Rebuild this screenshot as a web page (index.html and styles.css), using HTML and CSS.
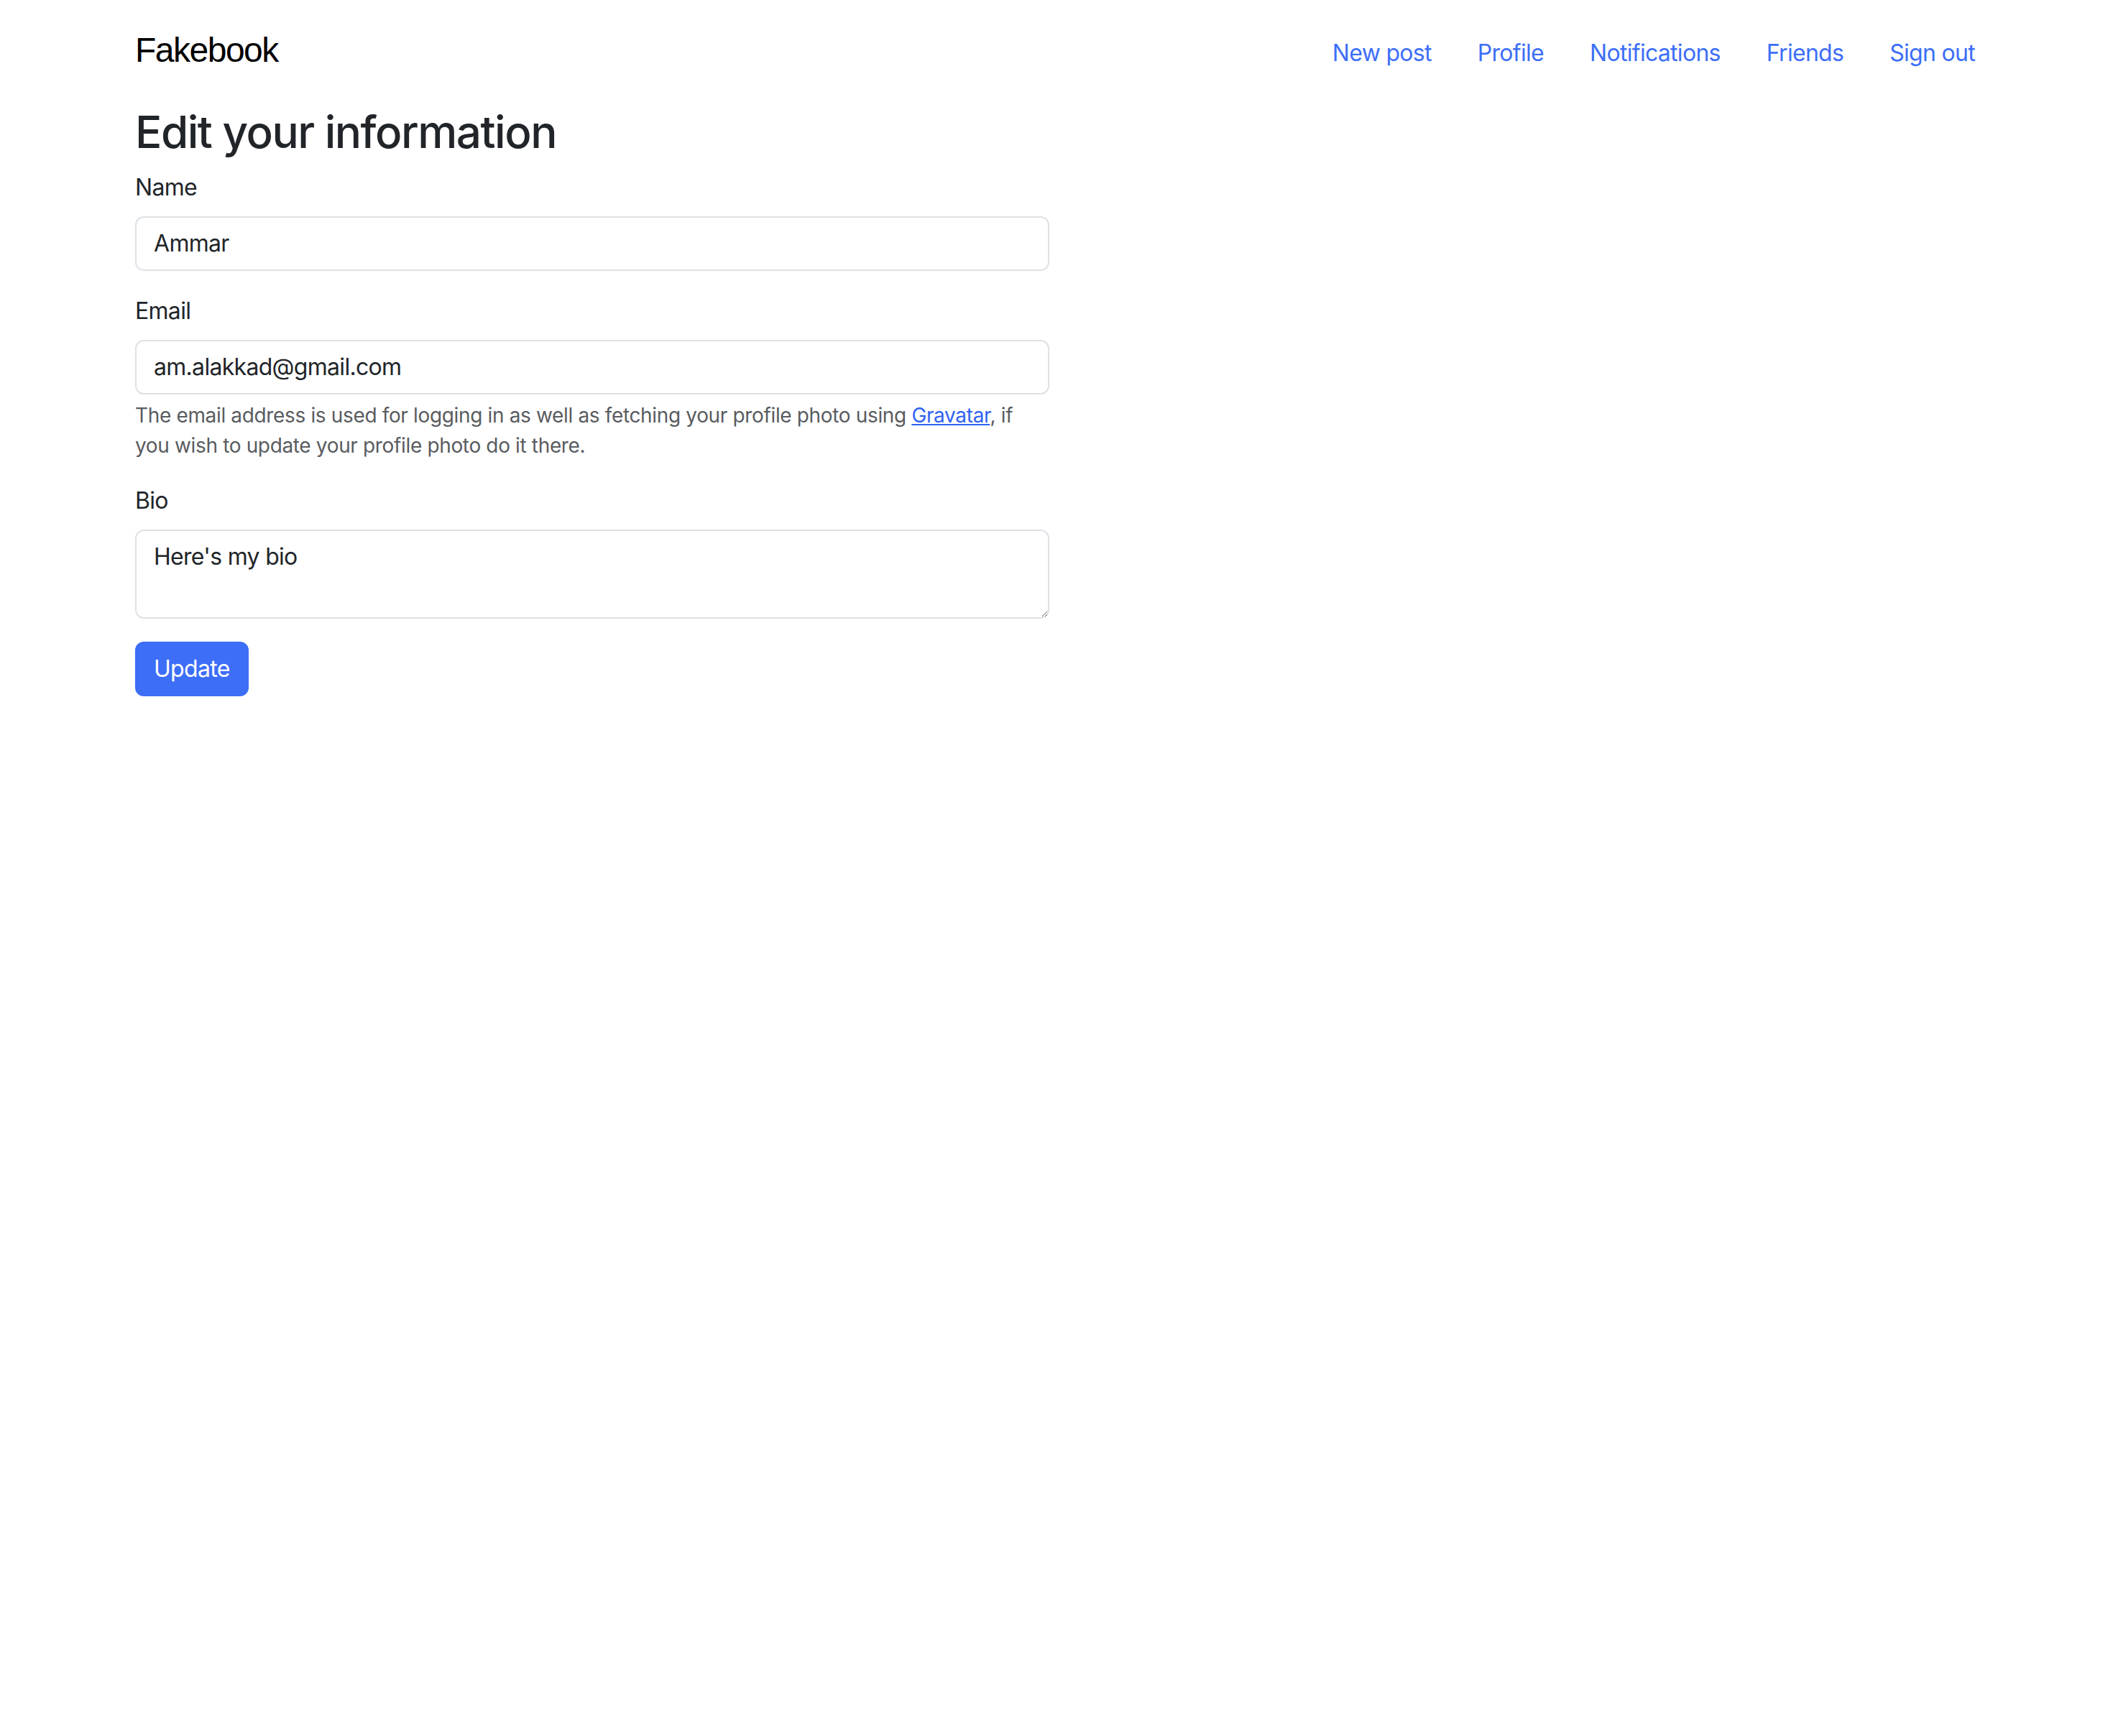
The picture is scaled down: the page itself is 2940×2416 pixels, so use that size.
FILE: index.html
```html
<!DOCTYPE html>
<html lang="en">
<head>
<meta charset="utf-8">
<title>Fakebook - Edit your information</title>
<link rel="stylesheet" href="styles.css">
</head>
<body>
<div class="page">
  <header class="topbar">
    <a class="brand" href="#">Fakebook</a>
    <nav class="nav">
      <a class="nav-link" href="#">New post</a>
      <a class="nav-link" href="#">Profile</a>
      <a class="nav-link" href="#">Notifications</a>
      <a class="nav-link" href="#">Friends</a>
      <a class="nav-link" href="#">Sign out</a>
    </nav>
  </header>
  <main class="content">
    <h2 class="title">Edit your information</h2>
    <form class="form">
      <div class="field">
        <label class="label" for="name">Name</label>
        <input class="control" id="name" type="text" value="Ammar">
      </div>
      <div class="field">
        <label class="label" for="email">Email</label>
        <input class="control" id="email" type="email" value="am.alakkad@gmail.com">
        <div class="help">The email address is used for logging in as well as fetching your profile photo using <a class="help-link" href="#">Gravatar</a>, if you wish to update your profile photo do it there.</div>
      </div>
      <div class="field">
        <label class="label" for="bio">Bio</label>
        <textarea class="control area" id="bio" rows="2">Here's my bio</textarea>
      </div>
      <button class="btn" type="button">Update</button>
    </form>
  </main>
</div>
</body>
</html>
```

FILE: styles.css
```css
html, body {
  margin: 0;
  padding: 0;
  background: #ffffff;
}

body {
  font-family: Inter, "Noto Sans", "Liberation Sans", sans-serif;
  color: #212529;
  font-size: 32px;
  line-height: 48px;
  letter-spacing: -0.7px;
}

.page {
  padding: 0 160px 0 188px;
}

.topbar {
  display: flex;
  justify-content: space-between;
  align-items: flex-start;
  height: 99px;
}

.brand {
  margin-top: 42px;
  font-family: "Liberation Sans", Arial, sans-serif;
  font-size: 48px;
  line-height: 56px;
  letter-spacing: -1.5px;
  color: #000000;
  text-decoration: none;
}

.nav {
  display: flex;
  margin-top: 50px;
}

.nav-link {
  padding: 0 32px;
  font-size: 32px;
  line-height: 48px;
  color: #3d6ef7;
  text-decoration: none;
}

.nav-link:first-child {
  padding-left: 34px;
}

.content {
  width: 1272px;
}

.title {
  margin: 48px 0 16px;
  font-size: 62px;
  line-height: 74px;
  font-weight: 500;
  letter-spacing: -1.5px;
  color: #212529;
}

.form {
  width: 1272px;
}

.field {
  margin-bottom: 32px;
}

.label {
  display: block;
  margin-bottom: 16px;
  font-size: 32px;
  line-height: 48px;
}

.control {
  display: block;
  width: 100%;
  box-sizing: border-box;
  margin: 0;
  padding: 12px 24px;
  font-family: Inter, "Noto Sans", "Liberation Sans", sans-serif;
  font-size: 32px;
  line-height: 48px;
  letter-spacing: -0.7px;
  color: #212529;
  background: #ffffff;
  border: 2px solid #dee2e6;
  border-radius: 12px;
  outline: none;
}

.area {
  height: 124px;
  resize: vertical;
}

.help {
  margin-top: 8px;
  padding-right: 26px;
  font-size: 28px;
  line-height: 42px;
  letter-spacing: -0.35px;
  color: #595c5f;
}

.help-link {
  color: #2f62f2;
  text-decoration: underline;
}

.btn {
  display: inline-block;
  margin: 0;
  padding: 12px 24px;
  font-family: Inter, "Noto Sans", "Liberation Sans", sans-serif;
  font-size: 32px;
  line-height: 48px;
  letter-spacing: -0.7px;
  color: #ffffff;
  background: #3d6ef7;
  border: 2px solid #3d6ef7;
  border-radius: 12px;
  cursor: pointer;
}
```
